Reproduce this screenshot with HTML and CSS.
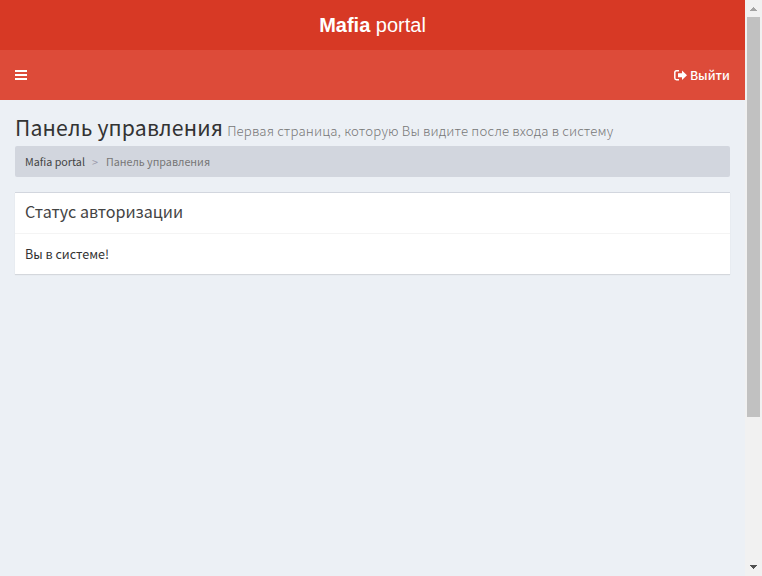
FILE: index.html
```html
<!DOCTYPE html>
<html lang="ru">
<head>
<meta charset="utf-8">
<title>Mafia portal</title>
<link rel="stylesheet" href="styles.css">
</head>
<body>
<div class="page">
  <header>
    <a class="logo"><b>Mafia</b> portal</a>
    <nav class="navbar">
      <a class="toggle"><svg width="12" height="10" viewBox="0 0 12 10" fill="#fff"><path d="M0 0h12v2H0zM0 4h12v2H0zM0 8h12v2H0z"/></svg></a>
      <a class="logout"><svg width="13" height="11" viewBox="0 0 13 11"><path d="M5 .8H2.500Q.8.8.8 2.500v5.500Q.8 9.700 2.500 9.700H5" fill="none" stroke="#fff" stroke-width="1.500"/><path d="M4 3.300h4V.5l5 4.800-5 4.800V7.300H4z" fill="#fff"/></svg><span>Выйти</span></a>
    </nav>
  </header>
  <main>
    <h1><span class="title">Панель управления</span><small>Первая страница, которую Вы видите после входа в систему</small></h1>
    <div class="breadcrumb"><span class="home">Mafia portal</span><span class="sep">&gt;</span><span class="current">Панель управления</span></div>
    <section class="box">
      <h3><span>Статус авторизации</span></h3>
      <p><span>Вы в системе!</span></p>
    </section>
  </main>
</div>
<div class="scrollbar">
  <svg class="up" width="7" height="4" viewBox="0 0 7 4" shape-rendering="crispEdges"><path d="M3 0h1v1h1v1h1v1h1v1H0V3h1V2h1V1h1z" fill="#a3a3a3"/></svg>
  <div class="thumb"></div>
  <svg class="down" width="7" height="4" viewBox="0 0 7 4" shape-rendering="crispEdges"><path d="M0 0h7v1H6v1H5v1H4v1H3V3H2V2H1V1H0z" fill="#505050"/></svg>
</div>
</body>
</html>
```
FILE: styles.css
```css
* { box-sizing: border-box; }
body {
  margin: 0;
  height: 576px;
  display: flex;
  overflow: hidden;
  background: #ecf0f5;
  font-family: "Noto Sans CJK SC", "Noto Sans", sans-serif;
  color: #333;
  white-space: nowrap;
}
.page { width: 745px; }
.logo {
  display: block;
  height: 50px;
  line-height: 50px;
  background: #d73925;
  color: #fff;
  font-family: "Liberation Sans", Arial, sans-serif;
  font-size: 20px;
  text-align: center;
}
.navbar {
  display: flex;
  justify-content: space-between;
  align-items: center;
  height: 50px;
  padding: 0 15px;
  background: #dd4b39;
  color: #fff;
}
.toggle, .logout { display: flex; align-items: center; }
.logout { gap: 3px; font-size: 12.3px; font-weight: 500; }
main { padding: 15px 15px 0; }
h1, h3, p { margin: 0; font-weight: 400; }
h1 {
  display: flex;
  align-items: baseline;
  gap: 4px;
  height: 31px;
  line-height: 24px;
  font-size: 21.2px;
}
.title { letter-spacing: .17px; }
small { font-size: 13.2px; font-weight: 300; letter-spacing: .15px; color: #777; }
.breadcrumb {
  display: flex;
  align-items: center;
  height: 31px;
  padding: 0 10px;
  border-radius: 2px;
  background: #d2d6de;
  font-size: 10.75px;
  color: #777;
}
.home { color: #444; }
.sep { margin: 0 8px 0 7px; color: #99a; }
.box {
  height: 82px;
  margin-top: 15px;
  border-top: 1px solid #d2d6de;
  background: #fff;
  box-shadow: 0 1px 1px rgba(0, 0, 0, .1);
}
h3 {
  height: 41px;
  padding: 0 10px;
  border-bottom: 1px solid #f4f4f4;
  line-height: 36px;
  font-size: 16.1px;
  color: #444;
}
p { padding: 0 10px; line-height: 40px; font-size: 12.55px; }
.scrollbar {
  display: flex;
  flex-direction: column;
  align-items: center;
  width: 17px;
  padding: 7px 2px 7px;
  background: #f1f1f1;
}
.thumb { width: 13px; height: 400px; margin: 6px 0 auto; background: #c1c1c1; }
```
